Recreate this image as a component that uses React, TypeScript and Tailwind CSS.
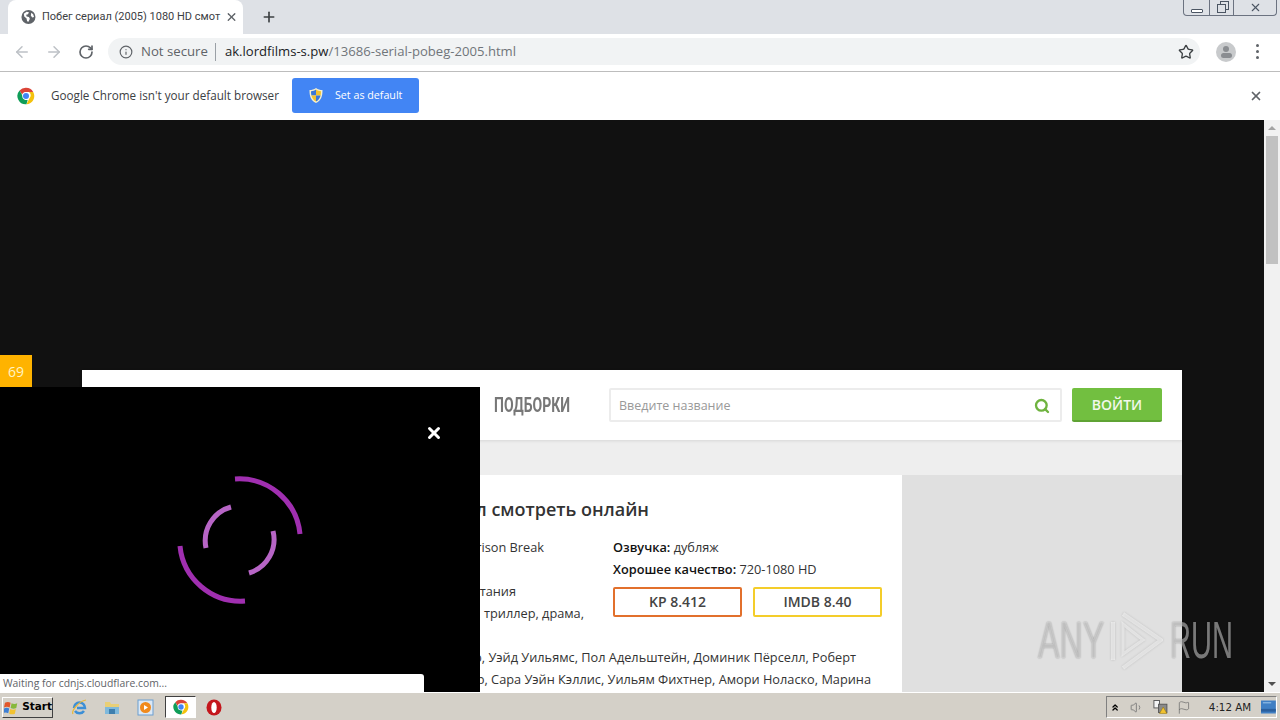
import React from 'react';
import { ArrowLeft, ArrowRight, RotateCw, Info, Star, X, Plus, Search, Flag, Volume1, ChevronsUp } from 'lucide-react';

const uiFont = { fontFamily: '"Open Sans", "Noto Sans", sans-serif' };

// Colored chrome ball, used in the infobar and on the taskbar
function ChromeLogo({ size }: { size: number }) {
  return (
    <svg width={size} height={size} viewBox="0 0 24 24">
      <path d="M12 1a11 11 0 0 1 9.6 5.5H12a5.5 5.5 0 0 0-5.2 3.7L3.4 4.7A11 11 0 0 1 12 1z" fill="#db4437" />
      <path d="M21.6 6.5A11 11 0 0 1 12.6 23l4.2-8.2a5.5 5.5 0 0 0-.9-8.3z" fill="#f4c20d" />
      <path d="M3.4 4.7l4.4 7.6a5.5 5.5 0 0 0 6.4 5l-1.6 5.7A11 11 0 0 1 3.4 4.7z" fill="#0f9d58" />
      <circle cx="12" cy="12" r="5" fill="#fff" />
      <circle cx="12" cy="12" r="4" fill="#4285f4" />
    </svg>
  );
}

function ShieldIcon() {
  return (
    <svg width="16" height="17" viewBox="0 0 16 17">
      <path d="M8 1C6 2.500 4 3 1.500 3c0 6 1 10.500 6.500 13 5.500-2.500 6.500-7 6.500-13C12 3 10 2.500 8 1z" fill="#f5f0d0" />
      <path d="M8 2.500C6.500 3.500 5 4 3 4.200c0 1.500.1 2.800.4 4.300H8z" fill="#3b78d8" />
      <path d="M8 8.500h4.600c.3-1.500.4-2.800.4-4.300C11 4 9.500 3.500 8 2.500z" fill="#f2c230" />
      <path d="M3.400 8.500C4 11 5.500 13.300 8 14.600V8.500z" fill="#f2c230" />
      <path d="M8 8.500v6.100c2.500-1.300 4-3.600 4.600-6.100z" fill="#3b78d8" />
    </svg>
  );
}

function TabGlobe() {
  return (
    <svg width="16" height="16" viewBox="0 0 16 16">
      <circle cx="8" cy="8" r="7.500" fill="#5f6368" />
      <path d="M3 4.500l3-2 2.500.5-1 2-2 .5.500 2 2.500.5 1 2-1.500 3-1.500-.5-.5-3-2.500-2zM11 3.500l2 1.500 1 3-2 .5-1.500-2z" fill="#fff" />
    </svg>
  );
}

function Spinner() {
  return (
    <svg width="140" height="140" viewBox="-70 -70 140 140" fill="none" strokeWidth="5">
      <path d="M-5 -61A61 61 0 0 1 60 -6" stroke="#a02fb0" />
      <path d="M5 61A61 61 0 0 1 -60 6" stroke="#a02fb0" />
      <path d="M-9 -33A35 35 0 0 0 -34 8" stroke="#b765c6" />
      <path d="M33 -9A35 35 0 0 1 9 33" stroke="#b765c6" />
    </svg>
  );
}

function Watermark() {
  return (
    <div className="absolute left-[1038px] top-[490px] flex h-[60px] w-[192px] items-center text-white/45 [text-shadow:0_0_2px_rgba(0,0,0,0.4)]">
      <span className="block w-[62px] origin-left scale-x-[0.62] whitespace-nowrap text-[52px] leading-none" style={{ fontFamily: '"Liberation Sans", sans-serif' }}>ANY</span>
      <svg className="ml-[10px] shrink-0 drop-shadow-[0_0_1px_rgba(0,0,0,0.3)]" width="53" height="60" viewBox="0 0 53 60" fill="none" stroke="rgba(255,255,255,0.5)" strokeWidth="4">
        <path d="M3 12v38" />
        <path d="M13 4l38 26-38 28" />
        <path d="M13 14v30l20-14z" strokeWidth="3" />
      </svg>
      <span className="ml-[7px] block w-[60px] origin-left scale-x-[0.56] whitespace-nowrap text-[52px] leading-none" style={{ fontFamily: '"Liberation Sans", sans-serif' }}>RUN</span>
    </div>
  );
}

function ChromeTop() {
  return (
    <div className="shrink-0" style={uiFont}>
      {/* Tab strip */}
      <div className="relative flex h-[34px] items-end bg-[#dee1e6] pl-[8px]">
        <div className="flex h-[34px] w-[235px] items-center rounded-t-lg bg-white pl-[13px] pr-[5px]">
          <TabGlobe />
          <span className="ml-[6px] w-[176px] whitespace-nowrap text-[11px] text-[#3c4043]" style={{ fontFamily: '"Roboto", sans-serif' }}>Побег сериал (2005) 1080 HD смот</span>
          <X className="ml-[7px] h-[14px] w-[14px] text-[#5f6368]" strokeWidth={2.5} />
        </div>
        <Plus className="mb-[9px] ml-[18px] h-[16px] w-[16px] text-[#3c4043]" strokeWidth={2.5} />
        {/* Window buttons */}
        <div className="absolute right-[3px] top-0 flex h-[16px] w-[94px] rounded-b-[4px] border border-t-0 border-[#6b7280] text-[#4b5563]">
          <div className="flex w-[25px] items-end justify-center pb-[2px]"><div className="h-[4px] w-[12px] rounded-[1px] border border-[#4b5563] bg-white" /></div>
          <div className="flex w-[25px] items-center justify-center border-x border-[#6b7280]">
            <div className="relative mt-[2px] h-[9px] w-[9px]">
              <div className="absolute -right-[3px] -top-[3px] h-[9px] w-[9px] border border-[#4b5563]" />
              <div className="absolute left-0 top-0 h-[9px] w-[9px] border border-[#4b5563] bg-[#dee1e6]" />
            </div>
          </div>
          <div className="flex flex-1 items-center justify-center"><X className="h-[13px] w-[13px]" strokeWidth={2} /></div>
        </div>
      </div>
      {/* Toolbar */}
      <div className="flex h-[38px] items-center border-b border-[#bdbdbd] bg-white pb-[2px] pl-[13px]">
        <ArrowLeft className="h-[18px] w-[18px] text-[#bdc1c6]" strokeWidth={2} />
        <ArrowRight className="ml-[14px] h-[18px] w-[18px] text-[#bdc1c6]" strokeWidth={2} />
        <RotateCw className="ml-[15px] h-[16px] w-[16px] text-[#5f6368]" strokeWidth={2.5} />
        <div className="ml-[14px] flex h-[27px] w-[1092px] items-center rounded-full bg-[#f1f3f4] pl-[11px] pr-[6px]">
          <Info className="h-[14px] w-[14px] text-[#5f6368]" strokeWidth={2} />
          <span className="ml-[8px] text-[13.2px] text-[#5f6368]">Not secure</span>
          <div className="ml-[7px] h-[18px] w-px bg-[#9aa0a6]" />
          <span className="ml-[9px] whitespace-nowrap text-[13.1px] text-[#202124]">ak.lordfilms-s.pw<span className="text-[#70757a]">/13686-serial-pobeg-2005.html</span></span>
          <Star className="ml-auto h-[16px] w-[16px] text-[#3c4043]" strokeWidth={2} />
        </div>
        <div className="ml-[16px] flex h-[20px] w-[20px] flex-col items-center justify-center overflow-hidden rounded-full bg-[#c8cacc]">
          <div className="h-[6px] w-[6px] rounded-full bg-[#8a8d91]" />
          <div className="mt-[1px] h-[5px] w-[11px] rounded-full bg-[#8a8d91]" />
        </div>
        <div className="ml-[20px] flex flex-col gap-[3px]">
          <div className="h-[3px] w-[3px] rounded-full bg-[#5f6368]" />
          <div className="h-[3px] w-[3px] rounded-full bg-[#5f6368]" />
          <div className="h-[3px] w-[3px] rounded-full bg-[#5f6368]" />
        </div>
      </div>
      {/* Default browser infobar */}
      <div className="flex h-[48px] items-center bg-white pl-[17px] pr-[17px]">
        <ChromeLogo size={18} />
        <span className="ml-[16px] w-[229px] whitespace-nowrap text-[11.7px] text-[#3c4043]">Google Chrome isn't your default browser</span>
        <div className="mb-[1px] ml-[12px] flex h-[35px] w-[127px] items-center rounded-[3px] bg-[#4285f4] pl-[16px] text-[10.7px] text-white">
          <ShieldIcon />
          <span className="ml-[11px]">Set as default</span>
        </div>
        <X className="ml-auto h-[14px] w-[14px] text-[#5f6368]" strokeWidth={3} />
      </div>
    </div>
  );
}

function SiteCard() {
  return (
    <div className="ml-[82px] w-[1100px] bg-[#eeeeee] text-[#333]" style={uiFont}>
      <div className="flex h-[70px] items-center justify-end bg-white pr-[20px] shadow-[0_1px_3px_rgba(0,0,0,0.1)]">
        <span className="mr-[40px] w-[75px] origin-left scale-x-[0.7] whitespace-nowrap text-[20px] font-bold text-[#777]" style={{ fontFamily: '"Roboto", sans-serif' }}>ПОДБОРКИ</span>
        <div className="flex h-[34px] w-[453px] items-center rounded-[2px] border-2 border-[#ececec] bg-white pl-[8px] pr-[10px] pt-[2px]">
          <span className="text-[12.5px] text-[#999]">Введите название</span>
          <Search className="ml-auto h-[16px] w-[16px] text-[#6fb33f]" strokeWidth={3.5} />
        </div>
        <div className="ml-[10px] flex h-[34px] w-[90px] items-center justify-center rounded-[2px] border-b-2 border-[#5fa334] bg-[#72bf40] text-[14px] font-semibold text-[#f2f8ec]">ВОЙТИ</div>
      </div>
      <div className="mt-[35px] flex h-[400px]">
        <div className="w-[820px] bg-white pt-[23px] pr-[20px] text-[12.75px] leading-[22px]">
          <div className="whitespace-nowrap pr-[233px] text-right text-[18px] font-semibold leading-[22px]">Побег сериал смотреть онлайн</div>
          <div className="mt-[16px] flex justify-end">
            <div className="mr-[29px] whitespace-nowrap text-right">
              <div className="pr-[40px]">Оригинал: Prison Break</div>
              <div>&nbsp;</div>
              <div className="pr-[68px]">Страна: Великобритания</div>
              <div>Жанр: детектив, триллер, драма,</div>
            </div>
            <div className="w-[269px]">
              <div><b className="font-semibold text-[#111]">Озвучка:</b> дубляж</div>
              <div><b className="font-semibold text-[#111]">Хорошее качество:</b> 720-1080 HD</div>
              <div className="mt-[7px] flex justify-between">
                <div className="flex h-[30px] w-[129px] items-center justify-center rounded-[2px] border-2 border-[#e2702c] text-[14px] font-semibold text-[#444]">KP 8.412</div>
                <div className="flex h-[30px] w-[129px] items-center justify-center rounded-[2px] border-2 border-[#f4cd2a] text-[14px] font-semibold text-[#444]">IMDB 8.40</div>
              </div>
            </div>
          </div>
          <div className="mt-[22px] whitespace-nowrap text-right">
            <div className="pr-[26px]">В ролях: Уильям Миллер, Уэйд Уильямс, Пол Адельштейн, Доминик Пёрселл, Роберт</div>
            <div className="pr-[11px]">Неппер, Рокмонд Данбар, Сара Уэйн Кэллис, Уильям Фихтнер, Амори Ноласко, Марина</div>
          </div>
        </div>
        <div className="flex-1 bg-[#e0e0e0]" />
      </div>
    </div>
  );
}

function PageArea() {
  return (
    <div className="relative flex h-[572px] shrink-0 overflow-hidden bg-[#111111]">
      <div className="flex-1 overflow-hidden pt-[250px]">
        <SiteCard />
      </div>
      {/* Scrollbar */}
      <div className="flex w-[16px] shrink-0 flex-col items-center bg-[#f1f1f1]">
        <div className="flex h-[16px] items-center justify-center"><div className="h-0 w-0 border-x-[4px] border-b-[4px] border-x-transparent border-b-[#a3a3a3]" /></div>
        <div className="h-[128px] w-[12px] bg-[#c1c1c1]" />
        <div className="mt-auto flex h-[16px] items-center justify-center"><div className="h-0 w-0 border-x-[4px] border-t-[4px] border-x-transparent border-t-[#505050]" /></div>
      </div>

      <Watermark />

      {/* Floating ad counter */}
      <div className="absolute left-0 top-[235px] flex h-[32px] w-[32px] items-center justify-center bg-[#ffb300] text-[14px] text-[#fff3c4]" style={uiFont}>69</div>

      {/* Popup with loader */}
      <div className="absolute bottom-0 left-0 flex h-[305px] w-[480px] items-center justify-center bg-black">
        <Spinner />
        <X className="absolute left-[425px] top-[37px] h-[18px] w-[18px] text-white" strokeWidth={4} />
      </div>

      {/* Chrome status bubble */}
      <div className="absolute bottom-0 left-0 flex h-[18px] w-[424px] items-center rounded-tr-[3px] bg-white pl-[3px] pt-[1px] text-[10.4px] text-[#5f6368]" style={uiFont}>Waiting for cdnjs.cloudflare.com...</div>
    </div>
  );
}

function Taskbar() {
  return (
    <div className="flex h-[28px] flex-1 items-center border-t border-white bg-[#d4d0c8] pl-[2px] pr-[3px] pt-[1px]" style={{ fontFamily: '"DejaVu Sans", sans-serif' }}>
      {/* Start button */}
      <div className="flex h-[21px] w-[51px] items-center rounded-[1px] border border-b-[#404040] border-l-white border-r-[#404040] border-t-white pl-[1px] text-[10.5px] font-bold text-black">
        <svg width="16" height="15" viewBox="0 0 16 15">
          <path d="M1 2.500q3-1.500 6 0l-1 5q-3-1.500-6 0z" fill="#e2572b" />
          <path d="M8 3q3 1.500 6 0l-1 5q-3 1.500-6 0z" fill="#86b83b" />
          <path d="M0 8.500q3-1.500 5.500 0l-1 5q-3-1.500-5.500 0z" fill="#3d7fd4" />
          <path d="M6.500 9q3 1.500 6 0l-1 5q-3 1.500-6 0z" fill="#f2c230" />
        </svg>
        <span className="ml-[3px]">Start</span>
      </div>
      {/* Quick launch */}
      <svg className="ml-[18px]" width="17" height="17" viewBox="0 0 17 17" fill="none">
        <path d="M3 9a5.500 5.500 0 0 1 11 0H6M13 12a5.500 5.500 0 0 1-9 0" stroke="#3d8fd6" strokeWidth="2.5" />
        <path d="M2 15C0 12 8 2 15 1" stroke="#e8b93c" strokeWidth="1.2" />
      </svg>
      <svg className="ml-[16px]" width="16" height="15" viewBox="0 0 16 15">
        <path d="M1 2h5l1 2h8v10H1z" fill="#e9cf76" />
        <path d="M1 7h14v7H1z" fill="#7fb9dc" />
        <path d="M5 9h6v5H5z" fill="#3f7fae" />
      </svg>
      <svg className="ml-[17px]" width="17" height="17" viewBox="0 0 17 17">
        <rect x="1" y="1" width="15" height="15" fill="#dbe8f5" stroke="#6b9ed0" />
        <circle cx="8.500" cy="8.500" r="5.500" fill="#f08a1d" />
        <path d="M7 6l4 2.500L7 11z" fill="#fff" />
      </svg>
      <div className="ml-[11px] flex h-[22px] w-[31px] items-center justify-center border border-b-white border-l-[#404040] border-r-white border-t-[#404040] bg-white">
        <ChromeLogo size={16} />
      </div>
      <svg className="ml-[10px]" width="16" height="17" viewBox="0 0 16 17">
        <ellipse cx="8" cy="8.500" rx="7.500" ry="8" fill="#c4161c" />
        <ellipse cx="8" cy="8.500" rx="2.700" ry="5.500" fill="#fff" />
      </svg>
      {/* Tray */}
      <div className="ml-auto flex h-[22px] w-[171px] items-center border border-b-white border-l-[#808080] border-r-white border-t-[#808080] pl-[3px] text-[#333]">
        <ChevronsUp className="h-[11px] w-[11px] text-black" strokeWidth={3} />
        <Volume1 className="ml-[10px] h-[15px] w-[15px] text-[#777]" strokeWidth={1.5} />
        <svg className="ml-[9px]" width="16" height="16" viewBox="0 0 16 16">
          <rect x="1" y="1" width="6" height="8" fill="#f5f5f5" stroke="#555" />
          <rect x="6" y="5" width="9" height="9" fill="#8a8a8a" stroke="#555" />
          <path d="M11 8l4 7H7z" fill="#f2c230" stroke="#8a6d00" strokeWidth="0.5" />
        </svg>
        <Flag className="ml-[9px] h-[15px] w-[15px] text-[#666]" strokeWidth={1.2} />
        <span className="ml-[18px] mt-[2px] whitespace-nowrap text-[10.3px] text-[#222]">4:12 AM</span>
        <svg className="ml-[10px]" width="16" height="14" viewBox="0 0 16 14">
          <rect width="16" height="14" fill="#3f7fc4" />
          <rect y="9" width="16" height="3" fill="#2a5f9e" />
          <path d="M2 2h9v1H2z" fill="#a9cff0" />
        </svg>
      </div>
    </div>
  );
}

export default function App() {
  return (
    <div className="flex h-screen w-screen flex-col overflow-hidden bg-[#d4d0c8]">
      <ChromeTop />
      <PageArea />
      <Taskbar />
    </div>
  );
}
